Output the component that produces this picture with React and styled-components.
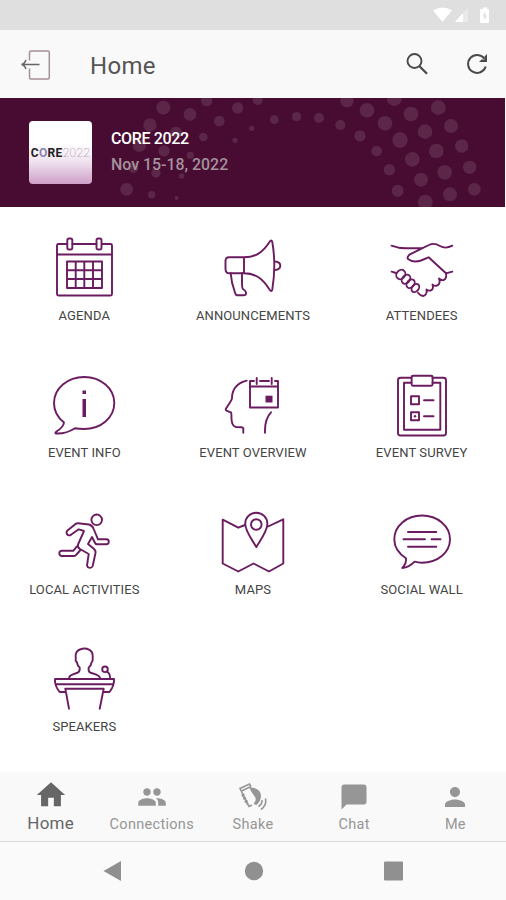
import React from "react";
import styled, { createGlobalStyle } from "styled-components";
import { MdChatBubble, MdHome, MdPeople, MdPerson } from "react-icons/md";

const GlobalStyle = createGlobalStyle`
  * {
    box-sizing: border-box;
  }

  body {
    margin: 0;
    background: #fff;
    font-family: Roboto, "Liberation Sans", sans-serif;
  }

  svg {
    display: block;
  }
`;

const Screen = styled.div`
  width: 506px;
  height: 900px;
  display: flex;
  flex-direction: column;
  overflow: hidden;
  background: #fff;
`;

const StatusBar = styled.div`
  height: 30px;
  flex: none;
  display: flex;
  justify-content: flex-end;
  background: #dfdfdf;
`;

const Header = styled.header`
  height: 68px;
  flex: none;
  display: flex;
  align-items: center;
  padding: 2px 14px 0 20px;
  background: #f9f9f9;
`;

const Title = styled.h1`
  flex: 1;
  margin: 2px 0 0 38px;
  font-size: 24px;
  line-height: 28px;
  font-weight: 400;
  letter-spacing: 0.3px;
  color: #555;
`;

const HeaderActions = styled.div`
  display: flex;
  gap: 30px;
  margin-top: -2px;
  color: #4a4a4a;
`;

const Banner = styled.section`
  width: 505px;
  height: 109px;
  flex: none;
  display: grid;
  background: #480c33;

  > * {
    grid-area: 1 / 1;
  }
`;

const BannerContent = styled.div`
  display: flex;
  align-items: center;
  gap: 19px;
  padding-left: 29px;
`;

const BannerText = styled.div`
  padding-bottom: 2px;
`;

const EventLogo = styled.div`
  width: 63px;
  height: 63px;
  display: flex;
  align-items: center;
  justify-content: center;
  border-radius: 4px;
  background: linear-gradient(#fff 35%, #efe2ee 65%, #cf9fc8);
  font-size: 12px;
  line-height: 14px;
  font-weight: 700;
  letter-spacing: 0.3px;
  color: #222;
`;

const LogoRing = styled.span`
  color: #8a86b4;
`;

const LogoYear = styled.span`
  font-weight: 100;
  color: #8a8088;
`;

const EventName = styled.div`
  font-size: ${props => props.$size || "16px"};
  line-height: 26px;
  font-weight: 500;
  color: ${props => (props.$muted ? "#a3919c" : "#fff")};
`;

const EventTitle = styled(EventName)`
  letter-spacing: -0.35px;
`;

const MenuGrid = styled.main`
  height: 565px;
  flex: none;
  display: grid;
  grid-template-columns: repeat(3, 1fr);
  grid-auto-rows: 137px;
  padding-top: 27px;
`;

const MenuItem = styled.div`
  display: flex;
  flex-direction: column;
  align-items: center;
`;

const MenuLabel = styled.div`
  margin-top: 6px;
  font-size: 13px;
  line-height: 16px;
  letter-spacing: 0.1px;
  white-space: nowrap;
  color: #444;
`;

const TabBar = styled.nav`
  height: 70px;
  flex: none;
  display: grid;
  grid-template-columns: repeat(5, 1fr);
  background: #f9f9f9;
  border-bottom: 1px solid #dadada;
`;

const Tab = styled.div`
  display: flex;
  flex-direction: column;
  align-items: center;
  color: ${props => (props.$active ? "#666" : "#969696")};
`;

const TabIcon = styled.div`
  height: 41px;
  display: flex;
  align-items: flex-end;
  padding-bottom: 1px;
`;

const TabLabel = styled.div`
  margin-top: ${props => (props.$active ? "0" : "2px")};
  font-size: ${props => (props.$active ? "17px" : "14.5px")};
  line-height: 20px;
  letter-spacing: ${props => (props.$active ? "0.2px" : "0.3px")};
`;

const SystemNav = styled.div`
  flex: 1;
  background: #fafafa;
`;

const IconSvg = styled.svg`
  fill: none;
  stroke: #6b1c60;
  stroke-width: 1.9;
  stroke-linecap: round;
  stroke-linejoin: round;

  .solid {
    fill: #6b1c60;
    stroke: none;
  }
`;

// centre and radius of every dot, in thirds of a pixel
const DOTS = [
  [490, 35, 21], [570, 55, 19], [620, 14, 17], [713, 36, 17], [658, 75, 16],
  [450, 87, 20], [528, 110, 18], [610, 123, 13], [705, 133, 8], [755, 97, 8],
  [418, 148, 20], [492, 165, 17], [571, 178, 11], [400, 216, 15], [468, 231, 14],
  [545, 240, 8], [380, 280, 19], [455, 296, 11], [530, 306, 6],
  [773, 12, 15], [823, 71, 13], [890, 62, 14], [957, 66, 15], [1021, 87, 15],
  [1080, 120, 17], [1130, 165, 16], [1168, 221, 17], [1193, 284, 18],
  [1041, 14, 20], [1101, 43, 22], [1155, 82, 22], [1200, 132, 23],
  [1237, 190, 22], [1263, 251, 21], [1276, 318, 22], [1183, 8, 22],
  [1233, 54, 22], [1275, 107, 22], [1309, 165, 22], [1334, 229, 22],
  [1350, 295, 21], [1315, 35, 22], [1353, 90, 21], [1385, 150, 20],
  [1409, 214, 20], [1423, 280, 19]
];

const MENU = [
  {
    label: "AGENDA",
    icon: (
      <>
        <path d="M17 10H8.500Q7 10 7 11.500V60q0 1.500 1.500 1.500h52Q62 61.500 62 60V11.500Q62 10 60.500 10H52M22.500 10H46.500M7 20.500H62" />
        <rect x="17.300" y="4.500" width="5" height="11" rx="1.800" />
        <rect x="46.500" y="4.500" width="5" height="11" rx="1.800" />
        <path d="M17 27.500H52V54H17ZM25.700 27.500V54M34.300 27.500V54M43 27.500V54M17 36.300H52M17 45H52" />
      </>
    )
  },
  {
    label: "ANNOUNCEMENTS",
    icon: (
      <>
        <path d="M25 23.300H10Q6.500 23.300 6.500 27V35Q6.500 39.300 10.500 39.300H25ZM25 23.300C37 23.300 44 18 50.500 8Q52.500 5 53.300 8Q57.300 31 53.300 55.500Q52.500 58.500 50.500 55.500C44 45 37 39.300 25 39.300" />
        <path d="M55.800 27.500Q61.300 28 61.300 31.700T55.800 36M11.700 39.300Q12.500 49 15.500 57Q16.500 61.300 18 61.300H24.500Q27.500 61.300 27 58.500Q26.500 56.500 24.500 55.500Q23 54.500 23 50V39.300" />
      </>
    )
  },
  {
    label: "ATTENDEES",
    icon: (
      <>
        <path d="M3.600 11.700Q10 14.300 18 14.300H34M64.300 11.700C59 14.500 56 14.500 52 12Q46 8.300 41 11L34 14.300L22 20.300Q18.500 23 20 25Q25 29 33 26.500L40.600 23.300L58 39.300L64.300 37.700M3.600 37.700L8 39" />
        <ellipse cx="12.800" cy="40.500" rx="4.200" ry="5" transform="rotate(40 12.800 40.500)" />
        <ellipse cx="18" cy="45.200" rx="3.700" ry="5" transform="rotate(40 18 45.200)" />
        <ellipse cx="22.600" cy="49.700" rx="3.500" ry="4.800" transform="rotate(40 22.600 49.700)" />
        <ellipse cx="27.400" cy="54" rx="3.300" ry="4.500" transform="rotate(40 27.400 54)" />
        <path d="M58 39.300Q59 45 55.500 46Q53 46.500 51 44.500Q53 50 49 51.500Q46 52.300 44.500 50.500Q46 55.500 42.500 56.500Q40 57 38.500 55.500Q39.500 61 35 62Q32 61.500 30 58.700" />
      </>
    )
  },
  {
    label: "EVENT INFO",
    icon: (
      <>
        <path d="M14 51.500C7.500 46.500 4 40 4 32C4 17.500 17.500 6 34.200 6S64.300 17.500 64.300 32S51 58 34 58Q29 58 25 57.200Q16 63 6 62.500Q4.500 62 6.500 60.500Q13.500 56 14 51.500Z" />
        <path className="solid" d="M32.500 19.500H36V23H32.500ZM32.500 28H36V46H32.500Z" />
      </>
    )
  },
  {
    label: "EVENT OVERVIEW",
    icon: (
      <>
        <path d="M27.700 9.700Q14 13 13 26Q13.500 28 11 31.500L7 37.500Q6 39.700 9 40.300L12 41.300Q12.500 42 12.500 48Q13 55.500 17 56L23 56.300L24.300 57V61.700M52 41.300Q45.500 48 46 61.700" />
        <path d="M35 10H31V36.500H59V10H56M41 10H50M31 15.500H59M37.700 7V13M52.700 7V13" />
        <path className="solid" d="M46.500 24.700H53.500V31.500H46.500Z" />
      </>
    )
  },
  {
    label: "EVENT SURVEY",
    icon: (
      <>
        <path d="M23.500 6.700H12.500Q10 6.700 10 9.200V62Q10 64.500 12.500 64.500H55.500Q58 64.500 58 62V9.200Q58 6.700 55.500 6.700H44.500" />
        <path d="M23.500 11.700H16V58.800H52.300V11.700H44.500" />
        <rect x="23.600" y="4.700" width="21" height="10" rx="1.500" />
        <path d="M23 25.300H31V33.300H23ZM23 41.300H31V49.300H23ZM36 29.300H45.500M36 45.300H45.500" />
        <circle className="solid" cx="27" cy="45.300" r="1.200" />
      </>
    )
  },
  {
    label: "LOCAL ACTIVITIES",
    icon: (
      <>
        <circle cx="46.700" cy="11.800" r="5.300" />
        <path d="M28 15.300L39 16.500Q42.500 17.500 43.700 21L48 31.300H56.300A2.500 2.500 0 0 1 56.300 36.300H47Q45.500 36.300 44.500 34L42 29L38 36L43.500 40.500Q46 42.500 45.500 45L42.700 58A3 3 0 0 1 37 57.500L38.700 46L30 41Q27 39 28 36.500L34 23L28.700 21.300L21 26.700A2.500 2.500 0 0 1 17.500 22.500L25.500 16Q26.500 15.200 28 15.300Z" />
        <path d="M26.700 38.500L23.500 42.700H11.500A2.700 2.700 0 0 0 11.500 48H24Q25.500 48 26.500 46.500L30.500 42" />
      </>
    )
  },
  {
    label: "MAPS",
    icon: (
      <>
        <path d="M26 17L19.300 19.700L3.700 11.700V55.500L19.300 63.500L34.500 55.500L50 63.500L64.300 55.500V11.300L49 18.500" />
        <path d="M37.300 39C34 33 26.200 23.500 26.200 15.800A11.100 11.100 0 0 1 48.400 15.800C48.400 23.500 40.700 33 37.300 39Z" />
        <circle cx="37.300" cy="16.500" r="5.300" />
      </>
    )
  },
  {
    label: "SOCIAL WALL",
    icon: (
      <path d="M18 50.300C10.500 45.500 6.300 39 6.300 31.300C6.300 18 18.500 7.500 34 7.500S62 18 62 31.300S49.500 54.700 34 54.700Q30 54.700 26.600 53.700Q21 59.500 14.300 60Q18.500 55.500 18 50.300ZM20 24H48.300M15.500 31.300H37M43.500 31.300H52.500M20 38.700H48.300" />
    )
  },
  {
    label: "SPEAKERS",
    icon: (
      <>
        <path d="M19 33.300Q19.500 30.500 22.300 29.700L28 27.500Q30 26.500 29.700 22.500Q27.500 21 27 17.500Q25 15.500 25.700 13V10Q26 6 30 4.500Q35 2.500 39 4.700Q42.700 6.500 42.700 11V13Q43.200 15.500 41.500 17.500Q41 21 38.700 22.500Q38 26.500 40 27.500L46.300 29.700Q49.500 31 50.300 33.300" />
        <path d="M5 34H64V36.500Q63.500 42 59.500 47H54.500M14.500 47H9.700Q5.500 42 5 36.500V34M6 39.300H63M19 63.700L15.300 43.700H53.700L49.700 63.700" />
        <circle cx="55" cy="24.300" r="2.800" />
        <path d="M57 26.500Q60.500 29 60 33.500" />
      </>
    )
  }
];

const ShakeIcon = () => (
  <svg width="32" height="30" viewBox="0 0 32 30" fill="none" stroke="currentColor" strokeWidth="1.600">
    <path d="M14 4.500L12.500 2L3 6.500L9.500 20L12 24.500L15 23M4.500 9L14 4.500" />
    <path d="M5.500 12L10.500 22" strokeWidth="3" strokeDasharray="2.500 1" />
    <path fill="currentColor" stroke="none" d="M12 5L17 6Q24 8 24 14Q24 19 19.500 23L16.500 22Q20 18 18 15L14.500 10Z" />
    <path d="M25 18Q25.500 22 21.500 24.500M28.500 16.500Q30 23 24 27.500" />
  </svg>
);

const TABS = [
  { label: "Home", icon: <MdHome size={34} />, active: true },
  { label: "Connections", icon: <MdPeople size={30} /> },
  { label: "Shake", icon: <ShakeIcon /> },
  { label: "Chat", icon: <MdChatBubble size={30} /> },
  { label: "Me", icon: <MdPerson size={30} /> }
];

const App = () => {
  return (
    <>
      <GlobalStyle />
      <Screen>
        <StatusBar>
          <svg width="78" height="30" viewBox="0 0 78 30" fill="#fff">
            <path d="M5 10.500Q15 4.500 24 10.500L14.500 22Z" />
            <path d="M40 8V22H27Z" fillOpacity="0.350" />
            <path d="M35 13V22H27Z" />
            <path d="M53 9H55V7.500H59V9H60Q61 9 61 10V22Q61 23 60 23H53Q52 23 52 22V10Q52 9 53 9Z" />
            <path d="M57.500 11.500L54.500 16.500H56.500V20.500L59 15.500H57.500Z" fill="#dfdfdf" />
          </svg>
        </StatusBar>

        <Header>
          <svg width="32" height="32" viewBox="0 0 32 32" fill="none" strokeWidth="1.500">
            <path d="M9.500 11.500V3.500Q9.500 2 11 2H28Q29.300 2 29.300 3.500V28.500Q29.300 30 28 30H11Q9.500 30 9.500 28.500V19.500" stroke="#a58f98" />
            <path d="M19.500 15.500H1.500M6 11Q4.500 15 1.500 15.500Q4.500 16 6 20" stroke="#666" />
          </svg>
          <Title>Home</Title>
          <HeaderActions>
            <svg width="30" height="30" viewBox="0 0 30 30" fill="none" stroke="currentColor">
              <circle cx="12.500" cy="12" r="7" strokeWidth="1.900" />
              <path d="M17.500 17.300L25 24.700" strokeWidth="2.300" />
            </svg>
            <svg width="30" height="30" viewBox="0 0 30 30" fill="none" stroke="currentColor">
              <path d="M22.500 9.800A9 9 0 1 0 23.700 17.500" strokeWidth="2" />
              <path d="M25 5V13H17L19.500 10.500H22.500V7.500Z" fill="currentColor" stroke="none" />
            </svg>
          </HeaderActions>
        </Header>

        <Banner>
          <svg width="505" height="109" viewBox="0 6 1515 327" fill="#fff" fillOpacity="0.110">
            {DOTS.map(([x, y, r]) => (
              <circle key={`${x}-${y}`} cx={x} cy={y} r={r} />
            ))}
          </svg>
          <BannerContent>
            <EventLogo>
              C<LogoRing>O</LogoRing>RE<LogoYear>2022</LogoYear>
            </EventLogo>
            <BannerText>
              <EventTitle>CORE 2022</EventTitle>
              <EventName $muted $size="15.900px">Nov 15-18, 2022</EventName>
            </BannerText>
          </BannerContent>
        </Banner>

        <MenuGrid>
          {MENU.map(item => (
            <MenuItem key={item.label}>
              <IconSvg width="68" height="68" viewBox="0 0 68 68">
                {item.icon}
              </IconSvg>
              <MenuLabel>{item.label}</MenuLabel>
            </MenuItem>
          ))}
        </MenuGrid>

        <TabBar>
          {TABS.map(tab => (
            <Tab key={tab.label} $active={tab.active}>
              <TabIcon>{tab.icon}</TabIcon>
              <TabLabel $active={tab.active}>{tab.label}</TabLabel>
            </Tab>
          ))}
        </TabBar>

        <SystemNav>
          <svg width="506" height="58" viewBox="0 0 506 58" fill="#909090">
            <path d="M103.500 29L121 19V39Z" />
            <circle cx="254" cy="29" r="9.200" />
            <rect x="384" y="19.500" width="19" height="19" rx="1" />
          </svg>
        </SystemNav>
      </Screen>
    </>
  );
};

export default App;
